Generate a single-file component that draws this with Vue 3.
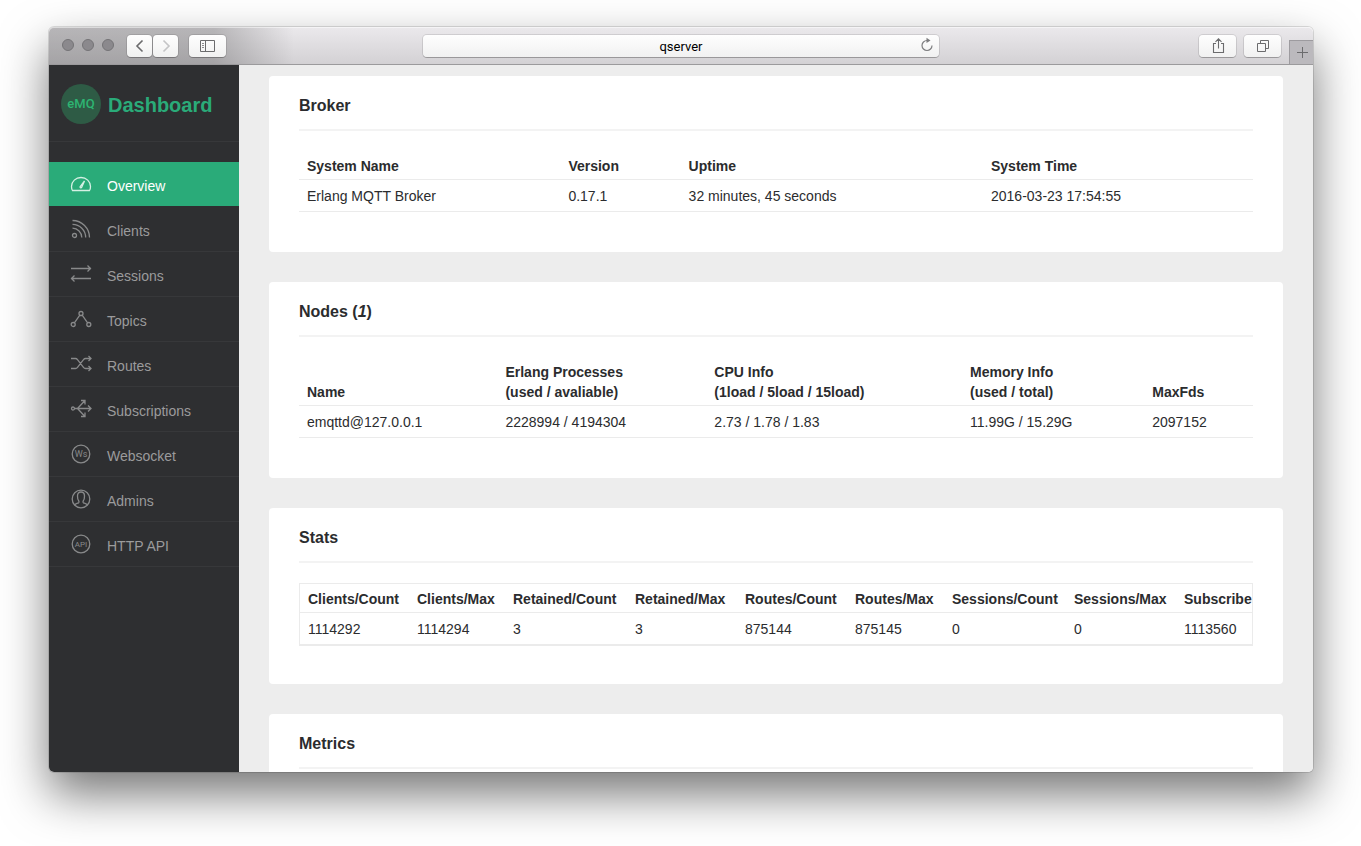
<template>
  <div class="desktop">
    <div class="window">
      <header class="toolbar">
        <div class="toolbar-left">
          <div class="lights">
            <button type="button" class="light" aria-label="Close"></button>
            <button type="button" class="light" aria-label="Minimize"></button>
            <button type="button" class="light" aria-label="Zoom"></button>
          </div>
          <div class="history">
            <button type="button" class="tool tool-small" aria-label="Back">
              <svg width="16" height="16" viewBox="0 0 16 16"><path d="M10.5 2.5 5 8l5.500 5.500" stroke="#6b6b6d" stroke-width="1.6" /></svg>
            </button>
            <button type="button" class="tool tool-small" aria-label="Forward">
              <svg width="16" height="16" viewBox="0 0 16 16"><path d="M5.5 2.5 11 8l-5.5 5.5" stroke="#c4c4c6" stroke-width="1.6" /></svg>
            </button>
          </div>
          <button type="button" class="tool" aria-label="Show sidebar">
            <svg width="16" height="14" viewBox="0 0 16 14">
              <path d="M.5 1.5h14v11H.5zM5.5 1.5v11" stroke="#6b6b6d" />
              <path d="M2 4.5h2M2 6.5h2M2 8.5h2" stroke="#8b8b8d" />
            </svg>
          </button>
        </div>

        <div class="address">
          <input v-model="address" type="text" aria-label="Address" />
          <button type="button" class="reload" aria-label="Reload">
            <svg width="14" height="16" viewBox="0 0 14 16">
              <path d="M7 3.5a5 5 0 1 0 5 5" stroke="#7d7d7f" stroke-width="1.2" />
              <path d="M6.5.8 10.5 3.6 6.5 6z" fill="#7d7d7f" />
            </svg>
          </button>
        </div>

        <div class="toolbar-right">
          <button type="button" class="tool" aria-label="Share">
            <svg width="16" height="18" viewBox="0 0 16 18">
              <path d="M6 6.5H3.5v9h10v-9H11M8.5 11.5V2M5.5 4.8l3-3 3 3" stroke="#6b6b6d" stroke-width="1.1" />
            </svg>
          </button>
          <button type="button" class="tool" aria-label="Show tabs">
            <svg width="14" height="14" viewBox="0 0 14 14">
              <path d="M1.5 4.5h8v8h-8zM4.5 4.500v-3h8v8h-3" stroke="#6b6b6d" />
            </svg>
          </button>
          <button type="button" class="new-tab" aria-label="New tab">
            <svg width="12" height="12" viewBox="0 0 12 12"><path d="M6.5 0v11M1 5.5h11" stroke="#6b6b6d" /></svg>
          </button>
        </div>
      </header>

      <div class="page">
        <aside class="sidebar">
          <div class="brand">
            <span class="logo">eMQ</span>
            <h1>Dashboard</h1>
          </div>
          <nav>
            <a
              v-for="item in menu"
              :key="item.name"
              href="#"
              :class="{ active: item.name === current }"
              @click.prevent="current = item.name"
            >
              <svg width="22" height="22" viewBox="0 0 22 22">
                <path v-if="item.path" :d="item.path" />
                <circle v-if="item.round" cx="11" cy="11" r="8.8" />
                <text v-if="item.label" x="11" y="14" :font-size="item.size">{{ item.label }}</text>
              </svg>
              <span>{{ item.name }}</span>
            </a>
          </nav>
        </aside>

        <main>
          <section class="card">
            <h2>Broker</h2>
            <table class="fixed">
              <colgroup>
                <col v-for="(col, i) in broker.columns" :key="i" :style="{ width: col.width }" />
              </colgroup>
              <thead>
                <tr>
                  <th v-for="col in broker.columns" :key="col.title">{{ col.title }}</th>
                </tr>
              </thead>
              <tbody>
                <tr>
                  <td v-for="value in broker.row" :key="value">{{ value }}</td>
                </tr>
              </tbody>
            </table>
          </section>

          <section class="card">
            <h2>Nodes (<em>1</em>)</h2>
            <table class="fixed">
              <colgroup>
                <col v-for="(col, i) in nodes.columns" :key="i" :style="{ width: col.width }" />
              </colgroup>
              <thead>
                <tr>
                  <th v-for="col in nodes.columns" :key="col.title">
                    {{ col.title }}<template v-if="col.note"><br />{{ col.note }}</template>
                  </th>
                </tr>
              </thead>
              <tbody>
                <tr>
                  <td v-for="value in nodes.row" :key="value">{{ value }}</td>
                </tr>
              </tbody>
            </table>
          </section>

          <section class="card card-boxed">
            <h2>Stats</h2>
            <div class="table-box">
              <table>
                <thead>
                  <tr>
                    <th v-for="stat in stats" :key="stat.name" :style="{ minWidth: stat.width + 'px' }">{{ stat.name }}</th>
                  </tr>
                </thead>
                <tbody>
                  <tr>
                    <td v-for="stat in stats" :key="stat.name">{{ stat.value }}</td>
                  </tr>
                </tbody>
              </table>
            </div>
          </section>

          <section class="card">
            <h2>Metrics</h2>
          </section>
        </main>
      </div>
    </div>
  </div>
</template>

<script setup>
import { ref } from 'vue';

const address = ref('qserver');
const current = ref('Overview');

const menu = [
  {
    name: 'Overview',
    path: 'M2.5 17.5h17c.8-1.2 1-2.500 1-4a9.5 9 0 0 0-19 0c0 1.500.2 2.800 1 4zM10.2 13.600l4.300-5.600-2.900 6.400a.8.8 0 0 1-1.400-.8z'
  },
  {
    name: 'Clients',
    path: 'M2.5 2.5a17 17 0 0 1 17 17M2.5 6.3a13.2 13.2 0 0 1 13.2 13.2M2.5 10.2a9.3 9.3 0 0 1 9.3 9.3M6.5 17.5a2 2 0 1 1-4 0 2 2 0 0 1 4 0z'
  },
  {
    name: 'Sessions',
    path: 'M1 5.5h20M17.5 2.5l3 3-3 3M21 15.5H1M4.5 12.5l-3 3 3 3'
  },
  {
    name: 'Topics',
    path: 'M13 5.500a2 2 0 1 1-4 0 2 2 0 0 1 4 0zM5.2 16.5a2 2 0 1 1-4 0 2 2 0 0 1 4 0zM20.800 16.5a2 2 0 1 1-4 0 2 2 0 0 1 4 0zM9.8 7.2 4.400 14.800M12.2 7.2l5.400 7.600'
  },
  {
    name: 'Routes',
    path: 'M1 5.5h4.500c1 0 1.500.5 2 1.200l6 7.600c.5.700 1 1.200 2 1.200H21M1 15.5h4.500c1 0 1.500-.5 2-1.200l6-7.600c.5-.7 1-1.200 2-1.200H21M18.5 3l2.500 2.500L18.5 8M18.5 13l2.500 2.500-2.500 2.500'
  },
  {
    name: 'Subscriptions',
    path: 'M4.5 10.5a1.5 1.5 0 1 1-3 0 1.5 1.5 0 0 1 3 0zM4.5 10.5H21M18 7.5l3 3-3 3M7.5 10.5l7-7.5M7.5 10.5l7 7.500M11 2.500h4v4M11 18.5h4v-4'
  },
  { name: 'Websocket', round: true, label: 'Ws', size: 9 },
  {
    name: 'Admins',
    round: true,
    path: 'M4.5 17c1-1.3 2.500-1.600 4-2.200.6-.3.600-1.300.1-2.100C7.7 11.5 7.5 10 7.5 8c0-2.600 1.300-4 3.500-4s3.500 1.400 3.500 4c0 2-.2 3.500-1.100 4.700-.5.800-.5 1.800.1 2.100 1.500.6 3 .9 4 2.200'
  },
  { name: 'HTTP API', round: true, label: 'API', size: 8 }
];

const broker = {
  columns: [
    { title: 'System Name', width: '27.4%' },
    { title: 'Version', width: '12.6%' },
    { title: 'Uptime', width: '31.7%' },
    { title: 'System Time', width: 'auto' }
  ],
  row: ['Erlang MQTT Broker', '0.17.1', '32 minutes, 45 seconds', '2016-03-23 17:54:55']
};

const nodes = {
  columns: [
    { title: 'Name', width: '20.8%' },
    { title: 'Erlang Processes', note: '(used / avaliable)', width: '21.9%' },
    { title: 'CPU Info', note: '(1load / 5load / 15load)', width: '26.8%' },
    { title: 'Memory Info', note: '(used / total)', width: '19.1%' },
    { title: 'MaxFds', width: 'auto' }
  ],
  row: ['emqttd@127.0.0.1', '2228994 / 4194304', '2.73 / 1.78 / 1.83', '11.99G / 15.29G', '2097152']
};

const stats = [
  { name: 'Clients/Count', value: 1114292, width: 109 },
  { name: 'Clients/Max', value: 1114294, width: 96 },
  { name: 'Retained/Count', value: 3, width: 122 },
  { name: 'Retained/Max', value: 3, width: 110 },
  { name: 'Routes/Count', value: 875144, width: 110 },
  { name: 'Routes/Max', value: 875145, width: 97 },
  { name: 'Sessions/Count', value: 0, width: 122 },
  { name: 'Sessions/Max', value: 0, width: 110 },
  { name: 'Subscribers/Count', value: 1113560, width: 140 }
];
</script>

<style>
body {
  margin: 0;
  background: #fff;
}
</style>

<style scoped>
* {
  box-sizing: border-box;
}

.desktop {
  height: 100vh;
  padding: 27px 48px 74px 49px;
  overflow: hidden;
  font: 14px/20px "Liberation Sans", Arial, sans-serif;
  color: #2b2c2e;
}

.window {
  display: flex;
  flex-direction: column;
  height: 100%;
  border-radius: 5px;
  box-shadow: 0 0 0 1px rgba(0, 0, 0, 0.12), 0 22px 48px rgba(0, 0, 0, 0.54);
}

svg {
  display: block;
  fill: none;
}

button {
  padding: 0;
  border: 0;
}

/* Browser toolbar */
.toolbar {
  display: grid;
  grid-template-columns: 1fr minmax(0, 516px) 1fr;
  flex: none;
  height: 38px;
  border-bottom: 1px solid #9b9a9c;
  border-radius: 5px 5px 0 0;
  background:
    linear-gradient(to right, rgba(0, 0, 0, 0.22) 165px, rgba(0, 0, 0, 0) 245px),
    linear-gradient(#ebe9ec, #d3d1d4);
  box-shadow: inset 0 1px 0 rgba(255, 255, 255, 0.5);
}

.toolbar-left,
.toolbar-right {
  display: flex;
  align-items: flex-start;
  padding-top: 8px;
}

.toolbar-left {
  gap: 11px;
  padding-left: 13px;
}

.toolbar-right {
  justify-content: flex-end;
  gap: 8px;
}

.lights {
  display: flex;
  gap: 8px;
  margin-right: 2px;
  padding-top: 4px;
}

.light {
  width: 12px;
  height: 12px;
  border: 1px solid #757477;
  border-radius: 50%;
  background: #8b898d;
}

.history {
  display: flex;
  gap: 1px;
}

.tool {
  display: flex;
  align-items: center;
  justify-content: center;
  width: 37px;
  height: 22px;
  border-radius: 4px;
  background: linear-gradient(#fefefe, #f1f1f1);
  box-shadow: 0 0 0 1px rgba(0, 0, 0, 0.1), 0 1px 0 rgba(0, 0, 0, 0.2);
}

.tool-small {
  width: 25px;
}

.address {
  position: relative;
  padding-top: 8px;
}

.address input {
  display: block;
  width: 100%;
  height: 22px;
  padding: 1px 24px 0;
  border: 0;
  border-radius: 4px;
  background: linear-gradient(#fefefe, #f1f1f1);
  box-shadow: 0 0 0 1px rgba(0, 0, 0, 0.1), 0 1px 0 rgba(0, 0, 0, 0.2);
  color: #000;
  font: 13px/16px Roboto, "Liberation Sans", sans-serif;
  text-align: center;
}

.reload {
  position: absolute;
  top: 10px;
  right: 5px;
  background: none;
}

.new-tab {
  display: flex;
  align-items: center;
  justify-content: center;
  width: 24px;
  height: 24px;
  margin-top: 5px;
  border-top: 1px solid #9d9b9f;
  border-left: 1px solid #9d9b9f;
  background: #bbb9bd;
}

.page {
  display: flex;
  flex: 1;
  min-height: 0;
  overflow: hidden;
  border-radius: 0 0 5px 5px;
  background: #ededed;
}

/* Sidebar */
.sidebar {
  flex: none;
  width: 190px;
  background: #2e2f31;
}

.brand {
  display: flex;
  align-items: center;
  gap: 7px;
  height: 77px;
  margin-bottom: 20px;
  padding: 2px 0 0 12px;
  border-bottom: 1px solid #37383a;
}

.brand h1 {
  margin: 0;
  padding-top: 2px;
  color: #2aab79;
  font-size: 20px;
  line-height: 24px;
}

.logo {
  width: 40px;
  height: 40px;
  border-radius: 50%;
  background: #2e5b45;
  color: #2db472;
  font: 500 13px/40px Roboto, "Liberation Sans", sans-serif;
  text-align: center;
}

nav a {
  display: flex;
  align-items: center;
  gap: 15px;
  height: 45px;
  padding-left: 21px;
  border-bottom: 1px solid #37383a;
  color: #9b9b9c;
  text-decoration: none;
}

nav a span {
  padding-top: 4px;
}

nav a svg {
  stroke: #88898a;
  stroke-width: 1.3;
}

nav a text {
  fill: #88898a;
  stroke: none;
  font-family: Roboto, "Liberation Sans", sans-serif;
  text-anchor: middle;
}

nav a.active {
  border-color: #2e2f31;
  background: #2aab79;
  color: #fff;
}

nav a.active svg {
  stroke: #d5f0e4;
}

/* Content */
main {
  flex: 1;
  min-width: 0;
  padding: 11px 30px;
}

.card {
  margin-bottom: 30px;
  padding: 0 30px 40px;
  border-radius: 4px;
  background: #fff;
}

.card-boxed {
  padding-bottom: 38px;
}

.card h2 {
  margin: 0 0 20px;
  padding: 20px 0 13px;
  border-bottom: 2px solid #f3f3f3;
  font-size: 16px;
  line-height: 20px;
}

table {
  width: 100%;
  border-spacing: 0;
}

.fixed {
  table-layout: fixed;
}

th,
td {
  border-bottom: 1px solid #ebebeb;
  text-align: left;
  white-space: nowrap;
}

th {
  padding: 5px 8px 3px;
  vertical-align: bottom;
}

td {
  padding: 6px 8px 5px;
}

.table-box {
  overflow: hidden;
  border: 1px solid #ebebeb;
}
</style>
